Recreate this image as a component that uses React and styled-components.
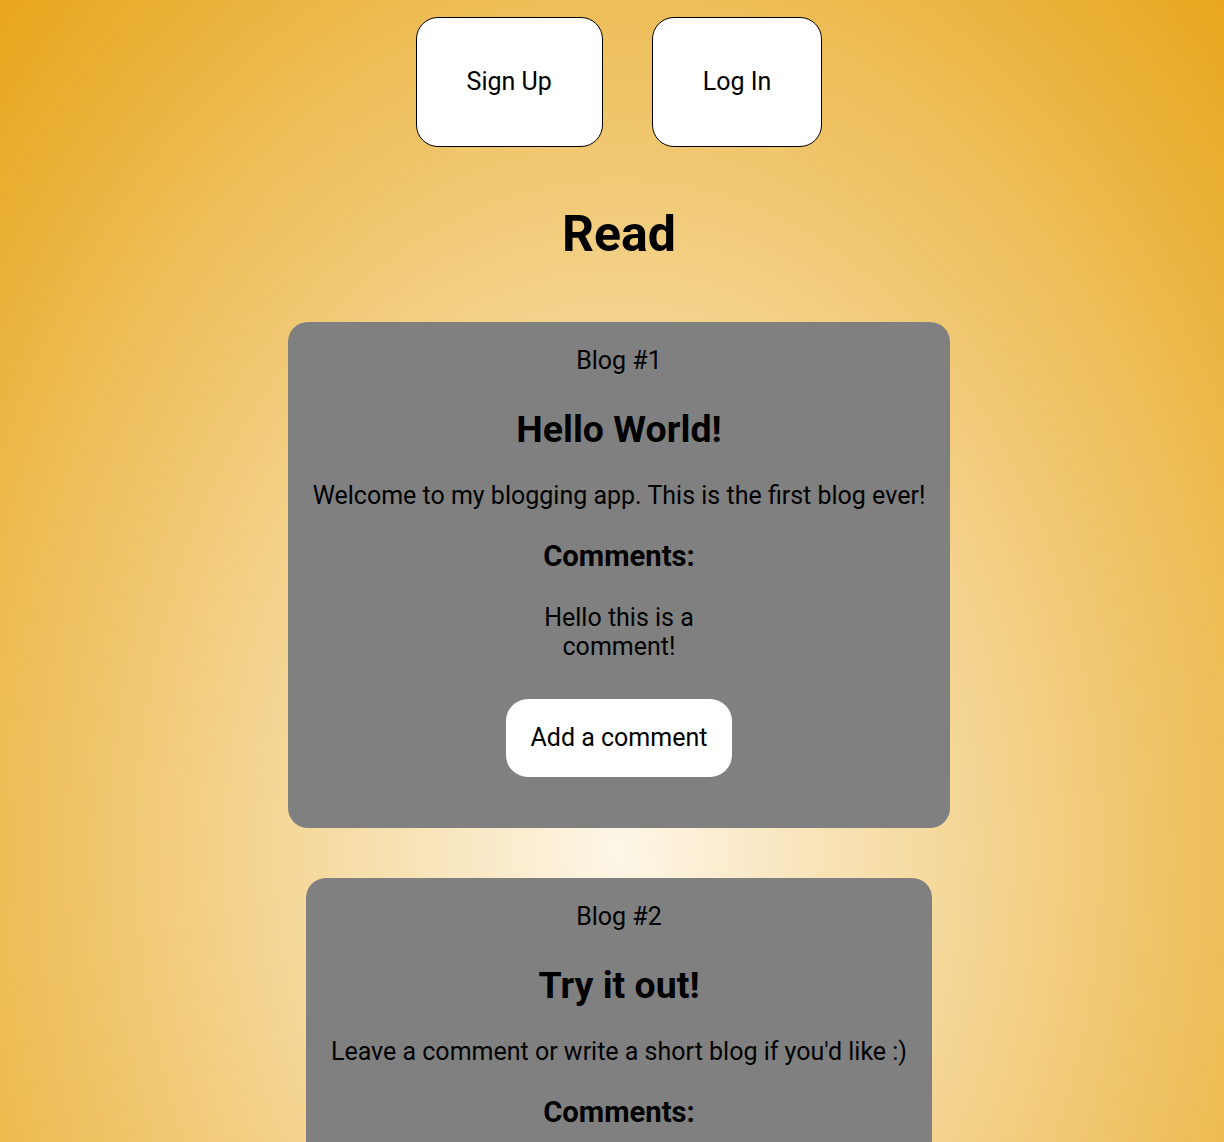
import styled, { createGlobalStyle } from "styled-components";

const GlobalStyle = createGlobalStyle`
  html, body {
    margin: 0;
    padding: 0;
  }

  body {
    font-family: Roboto, "Liberation Sans", sans-serif;
    font-size: 25px;
    color: #000;
    background: #e7a61c;
  }
`;

const Page = styled.div`
  min-height: 1700px;
  padding: 17px 0 60px 14px;
  box-sizing: border-box;
  background: radial-gradient(
    ellipse 865px 1202px at calc(50% + 7px) 850px,
    #fdf6e7 0%,
    #e7a61c 100%
  );
`;

const Nav = styled.nav`
  display: flex;
  justify-content: center;
  gap: 49px;
`;

const NavButton = styled.button`
  font-family: inherit;
  font-size: 25px;
  line-height: 28px;
  color: #000;
  background: #fff;
  border: 1px solid #000;
  border-radius: 22px;
  padding: 50px;
  cursor: pointer;
`;

const Title = styled.h1`
  margin: 59px 0 60px;
  font-size: 50px;
  line-height: 56px;
  font-weight: 700;
  text-align: center;
`;

const Feed = styled.section`
  display: flex;
  flex-direction: column;
  align-items: center;
  gap: 50px;
`;

const Card = styled.article`
  width: fit-content;
  padding: 0 25px 51px;
  background: #808080;
  border-radius: 20px;
  display: flex;
  flex-direction: column;
  align-items: center;
  text-align: center;
`;

const Label = styled.p`
  margin: 25px 0 0;
  line-height: 28px;
`;

const BlogTitle = styled.h2`
  margin: 33px 0 0;
  font-size: 37.5px;
  line-height: 42px;
  font-weight: 700;
`;

const Body = styled.p`
  margin: 32px 0 0;
  line-height: 28px;
  white-space: nowrap;
`;

const CommentsHeading = styled.h3`
  margin: 30px 0 0;
  font-size: 29.25px;
  line-height: 33px;
  font-weight: 700;
`;

const Comment = styled.p`
  margin: 30px 0 0;
  max-width: 200px;
  line-height: 29px;
`;

const AddButton = styled.button`
  margin-top: 38px;
  font-family: inherit;
  font-size: 25px;
  line-height: 28px;
  color: #000;
  background: #fff;
  border: none;
  border-radius: 22px;
  padding: 25px;
  cursor: pointer;
`;

const blogs = [
  {
    id: 1,
    title: "Hello World!",
    body: "Welcome to my blogging app. This is the first blog ever!",
    comments: ["Hello this is a comment!"],
  },
  {
    id: 2,
    title: "Try it out!",
    body: "Leave a comment or write a short blog if you'd like :)",
    comments: ["Nice app!"],
  },
];

function BlogCard({ blog }) {
  return (
    <Card>
      <Label>Blog #{blog.id}</Label>
      <BlogTitle>{blog.title}</BlogTitle>
      <Body>{blog.body}</Body>
      <CommentsHeading>Comments:</CommentsHeading>
      {blog.comments.map((c, i) => (
        <Comment key={i}>{c}</Comment>
      ))}
      <AddButton>Add a comment</AddButton>
    </Card>
  );
}

export default function App() {
  return (
    <Page>
      <GlobalStyle />
      <Nav>
        <NavButton>Sign Up</NavButton>
        <NavButton>Log In</NavButton>
      </Nav>
      <Title>Read</Title>
      <Feed>
        {blogs.map((blog) => (
          <BlogCard key={blog.id} blog={blog} />
        ))}
      </Feed>
    </Page>
  );
}
